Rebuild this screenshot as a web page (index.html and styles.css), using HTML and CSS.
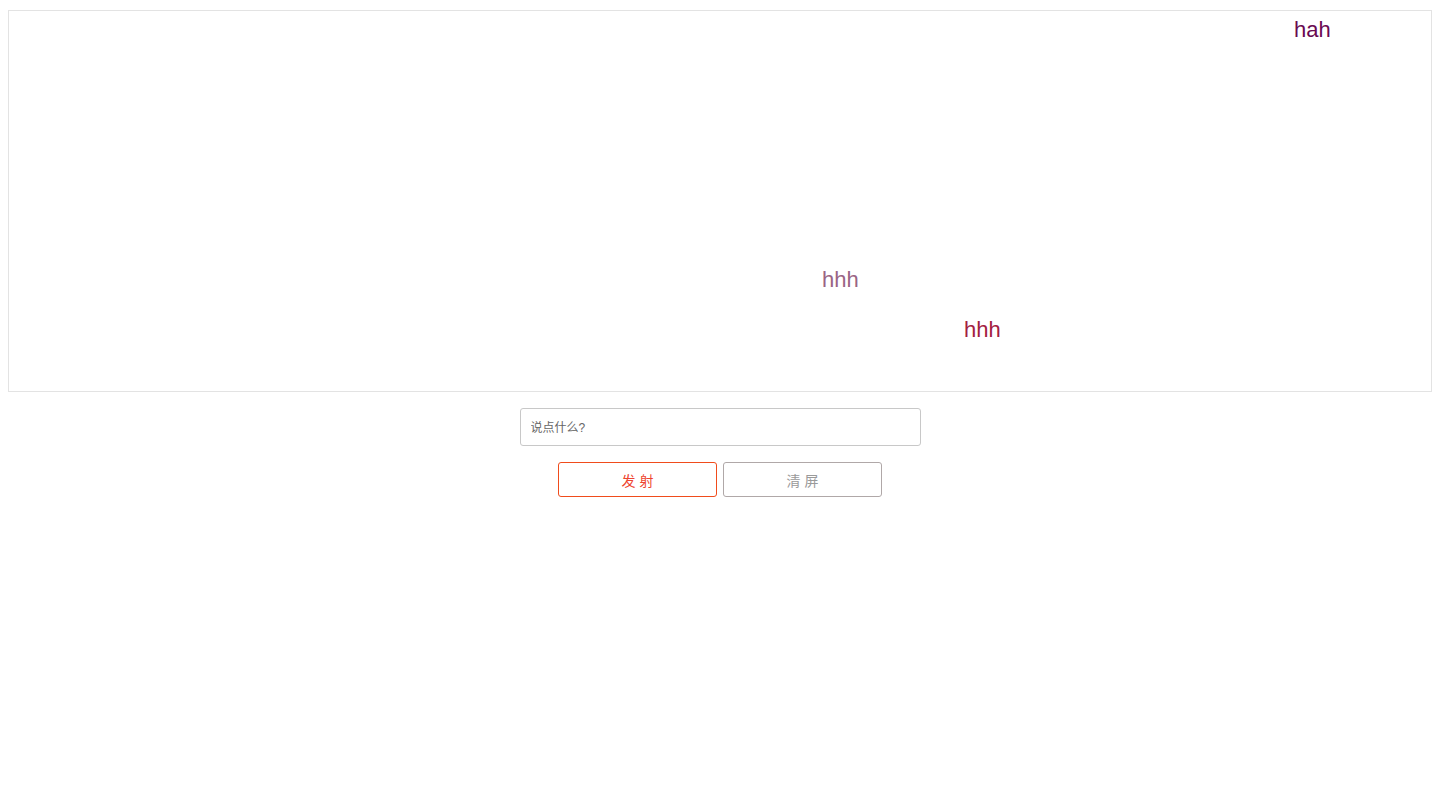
FILE: index.html
```html
<!DOCTYPE html>
<html lang="zh">
<head>
<meta charset="utf-8">
<title>弹幕</title>
<link rel="stylesheet" href="styles.css">
</head>
<body>
<div class="screen">
  <span class="danmu danmu-1">hah</span>
  <span class="danmu danmu-2">hhh</span>
  <span class="danmu danmu-3">hhh</span>
</div>
<div class="controls">
  <input class="msg-input" type="text" placeholder="说点什么?">
  <div class="btn-row">
    <button class="btn btn-send">发 射</button>
    <button class="btn btn-clear">清 屏</button>
  </div>
</div>
</body>
</html>
```

FILE: styles.css
```css
html, body {
  background: #fff;
}
body {
  margin: 10px 8px;
  font-family: "Liberation Sans", Arial, "Noto Sans CJK SC", sans-serif;
}
.screen {
  position: relative;
  height: 380px;
  border: 1px solid #e3e3e3;
  overflow: hidden;
}
.danmu {
  position: absolute;
  font-size: 22px;
  line-height: normal;
  white-space: nowrap;
}
.danmu-1 { top: 6px; left: 1285px; color: #6a0a52; }
.danmu-2 { top: 256px; left: 813px; color: #9a6484; }
.danmu-3 { top: 306px; left: 955px; color: #a3203f; }
.controls {
  margin-top: 16px;
  display: flex;
  flex-direction: column;
  align-items: center;
  gap: 16px;
}
.msg-input {
  box-sizing: border-box;
  width: 401px;
  height: 38px;
  border: 1px solid #c8c8c8;
  border-radius: 3px;
  padding: 1px 10px 0;
  font-size: 12px;
  font-family: "Liberation Sans", Arial, "Noto Sans CJK SC", sans-serif;
  color: #333;
  outline: none;
}
.msg-input::placeholder {
  color: #666;
}
.btn-row {
  display: flex;
  gap: 6px;
}
.btn {
  box-sizing: border-box;
  width: 159px;
  height: 35px;
  background: #fff;
  border-radius: 3px;
  font-size: 14px;
  font-family: "Liberation Sans", Arial, "Noto Sans CJK SC", sans-serif;
  padding: 0;
  cursor: pointer;
}
.btn-send {
  border: 1px solid #f04c1c;
  color: #ee4430;
}
.btn-clear {
  border: 1px solid #b0a8a8;
  color: #9a9a9a;
}
```
